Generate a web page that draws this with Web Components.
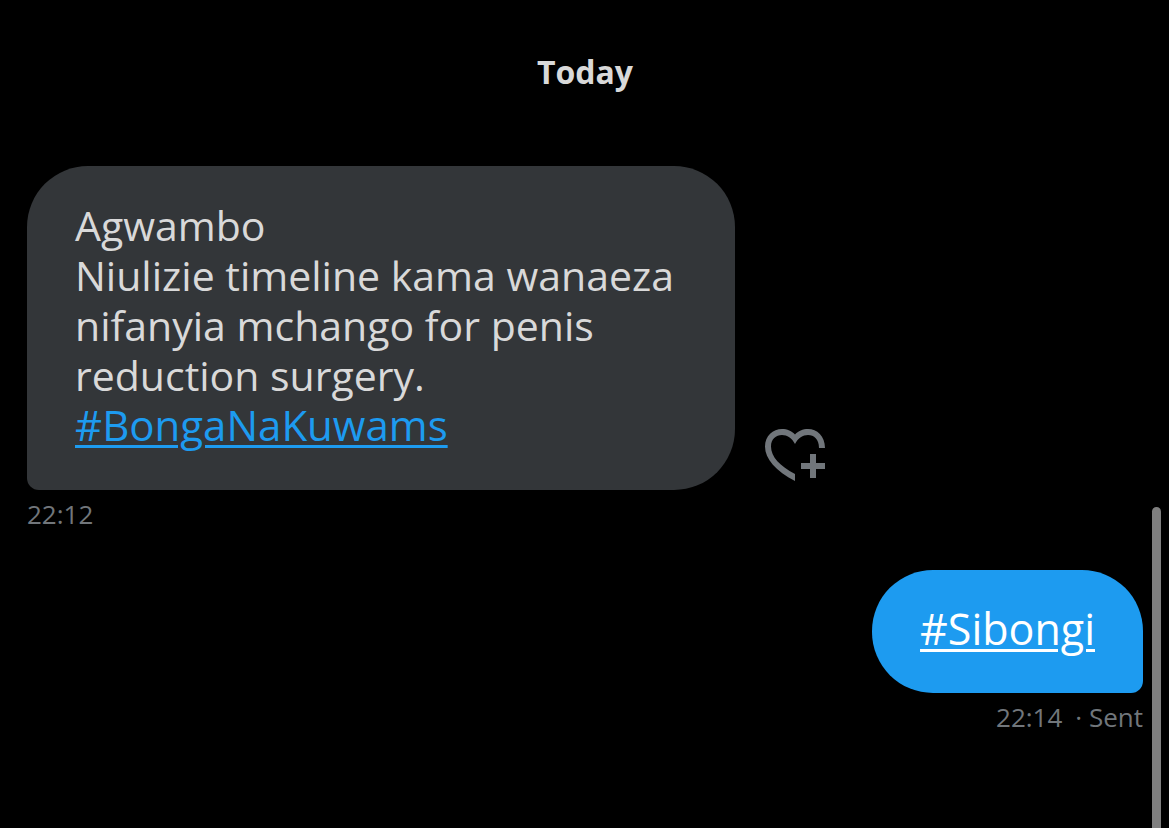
<!DOCTYPE html>
<html lang="sw">
<head>
<meta charset="utf-8">
<meta name="viewport" content="width=device-width, initial-scale=1">
<title>Messages</title>
<style>
  body { margin: 0; background: #000; color: #d9d9d9; font-family: "Open Sans", "Noto Sans", sans-serif; }
</style>
</head>
<body>
<chat-thread>
  <chat-day>Today</chat-day>
  <chat-message>Agwambo<br>Niulizie timeline kama wanaeza nifanyia mchango for penis reduction surgery. <chat-tag name="BongaNaKuwams"></chat-tag>
    <react-button slot="action"></react-button>
    <time slot="meta">22:12</time>
  </chat-message>
  <chat-message sent><chat-tag name="Sibongi"></chat-tag>
    <time slot="meta">22:14</time>
    <span slot="meta">· Sent</span>
  </chat-message>
</chat-thread>
<script>
function define(name, html) {
  customElements.define(name, class extends HTMLElement {
    constructor() {
      super();
      this.attachShadow({ mode: "open" }).innerHTML = html;
    }
    connectedCallback() {
      const link = this.shadowRoot.querySelector("a");
      if (link) {
        link.textContent = "#" + this.getAttribute("name");
        link.href = "#" + this.getAttribute("name");
      }
    }
  });
}

define("chat-tag", `
  <style>
    :host { display: inline; font-size: var(--tag-size, 42px); }
    a { color: var(--tag-color, #1d9bf0); text-decoration: underline; text-decoration-thickness: 3px; text-underline-offset: 4px; }
  </style>
  <a href="#"></a>`);

define("react-button", `
  <style>
    :host { display: block; }
    button { display: block; padding: 0; border: 0; background: none; color: #71767b; cursor: pointer; }
    svg { display: block; }
  </style>
  <button type="button" aria-label="Add reaction">
    <svg width="60" height="54" viewBox="0 0 60 54" fill="currentColor" aria-hidden="true">
      <path d="M30 53C11 43 0 31 0 18.500C0 8 8 1 17 1C22 1 27 3 30 6.500C33 3 38 1 43 1C52 1 60 8 60 20H54C54 11 49 7 43 7C38 7 33 10 30 16C27 10 22 7 17 7C11 7 6 11 6 18.500C6 29 15 38 30 46Z"/>
      <path d="M45 26h6v9h9v6h-9v9h-6v-9h-9v-6h9z"/>
    </svg>
  </button>`);

define("chat-day", `
  <style>
    :host { display: block; text-align: center; }
    h2 { margin: 0; font-size: 32px; line-height: 44px; font-weight: 700; }
  </style>
  <h2><slot></slot></h2>`);

define("chat-message", `
  <style>
    :host { display: flex; flex-direction: column; align-items: flex-start; }
    .row { display: flex; align-items: flex-end; gap: 30px; }
    .bubble { box-sizing: border-box; max-width: 708px; padding: 34px 48px 40px; border-radius: 61px 61px 61px 12px; background: #333639; font-size: 41px; line-height: 50px; }
    .action { padding-bottom: 8px; }
    .meta { display: flex; gap: 13px; padding: 6px 0 2px; color: #71767b; font-size: 26px; line-height: 36px; }
    :host([sent]) { align-items: flex-end; --tag-color: #fff; --tag-size: 43px; }
    :host([sent]) .bubble { background: #1d9bf0; border-radius: 61px 61px 12px 61px; font-size: 43px; padding-bottom: 39px; }
    :host([sent]) .action { display: none; }
  </style>
  <div class="row">
    <div class="bubble"><slot></slot></div>
    <div class="action"><slot name="action"></slot></div>
  </div>
  <div class="meta"><slot name="meta"></slot></div>`);

define("chat-thread", `
  <style>
    :host { display: block; position: relative; box-sizing: border-box; min-height: 100vh; overflow: hidden; }
    main { display: flex; flex-direction: column; gap: 36px; padding: 50px 26px 36px 27px; }
    ::slotted(chat-day) { margin-bottom: 36px; }
    .thumb { position: absolute; right: 8px; top: 507px; bottom: -8px; width: 9px; border-radius: 5px; background: #7f7f7f; }
  </style>
  <main><slot></slot></main>
  <div class="thumb"></div>`);
</script>
</body>
</html>
